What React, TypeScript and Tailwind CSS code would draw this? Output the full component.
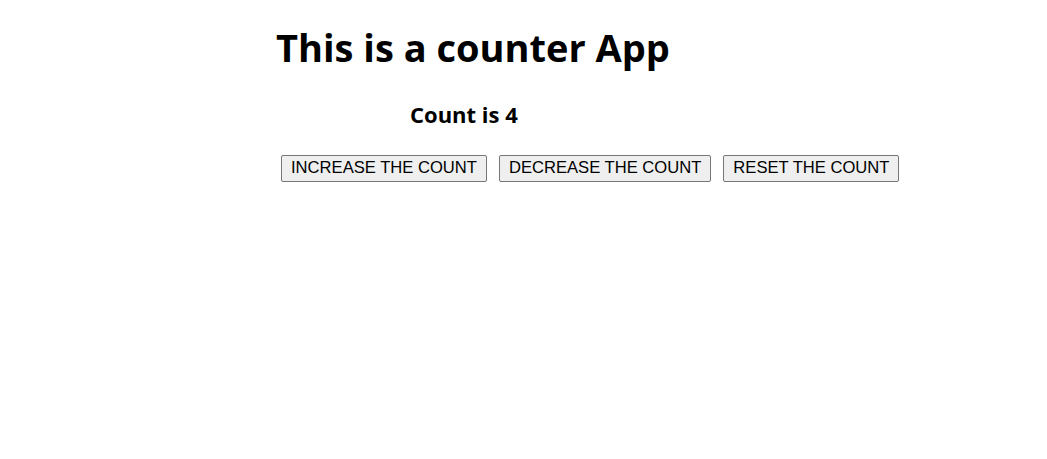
import { useState } from 'react';

export default function App() {
  const [count, setCount] = useState(4);

  return (
    <div className="min-h-[459px] bg-white text-black">
      <div className="pl-[276px] pt-[21px]">
        <h1 className="text-[38px] font-bold leading-[52px] font-['Open_Sans',sans-serif]">
          This is a counter App
        </h1>
      </div>
      <div className="pl-[410px] pt-[26px]">
        <h3 className="text-[22px] font-bold leading-[30px] font-['Open_Sans',sans-serif]">Count is {count}</h3>
      </div>
      <div className="flex gap-3 pl-[281px] pt-[26px] font-['Liberation_Sans',Arial,sans-serif]">
        <button
          onClick={() => setCount(c => c + 1)}
          className="h-[27px] rounded-[2px] border border-[#767676] bg-[#efefef] px-[9px] text-[16.6px] leading-none"
        >
          INCREASE THE COUNT
        </button>
        <button
          onClick={() => setCount(c => c - 1)}
          className="h-[27px] rounded-[2px] border border-[#767676] bg-[#efefef] px-[9px] text-[16.6px] leading-none"
        >
          DECREASE THE COUNT
        </button>
        <button
          onClick={() => setCount(0)}
          className="h-[27px] rounded-[2px] border border-[#767676] bg-[#efefef] px-[9px] text-[16.6px] leading-none"
        >
          RESET THE COUNT
        </button>
      </div>
    </div>
  );
}
